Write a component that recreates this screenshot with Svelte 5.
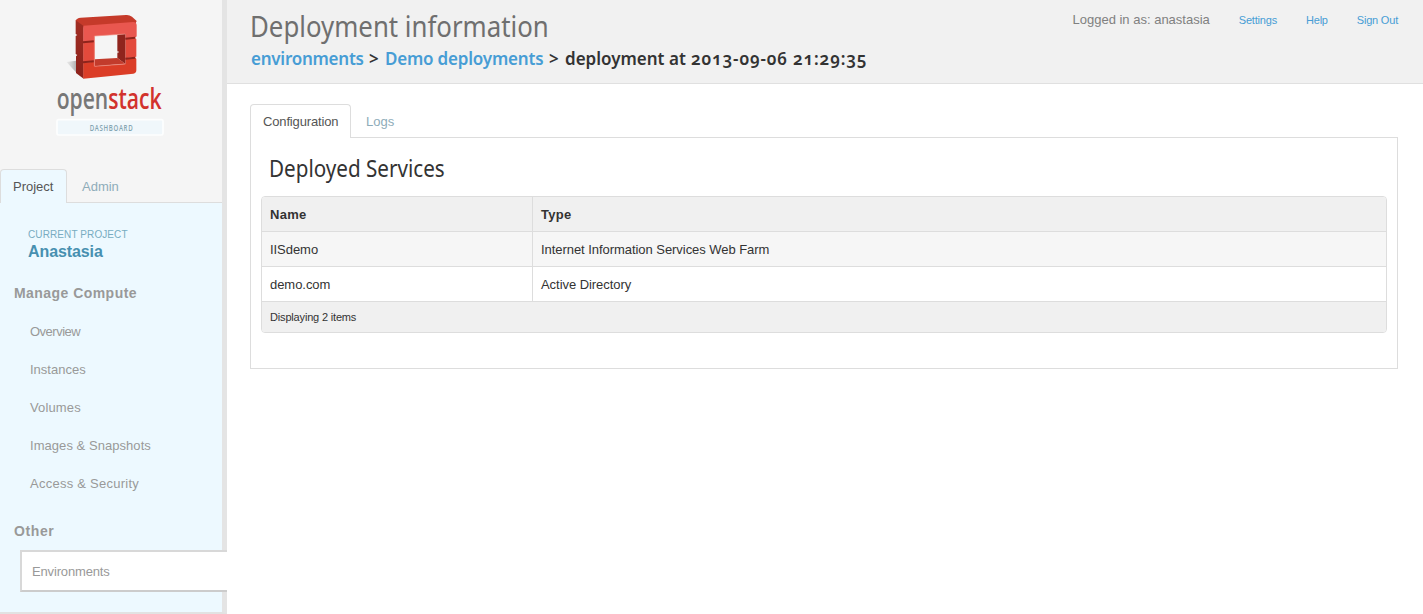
<script>
  const compute = ['Overview', 'Instances', 'Volumes', 'Images & Snapshots', 'Access & Security'];
  const services = [
    { name: 'IISdemo', type: 'Internet Information Services Web Farm' },
    { name: 'demo.com', type: 'Active Directory' }
  ];
</script>

<div class="page">
  <aside>
    <div class="brand">
      <svg width="150" height="145" viewBox="0 0 450 435" role="img" aria-label="OpenStack Dashboard">
        <defs>
          <linearGradient id="shadow" x1="0" x2="1">
            <stop offset="0" stop-color="#aaa" stop-opacity="0.15" />
            <stop offset="1" stop-color="#555" stop-opacity="0.85" />
          </linearGradient>
          <linearGradient id="side" x1="0" y1="0" x2="0" y2="1">
            <stop offset="0" stop-color="#a12d23" />
            <stop offset="1" stop-color="#8c221b" />
          </linearGradient>
        </defs>
        <path d="M80 186L108 182V218L129 235Q105 216 80 186Z" fill="url(#shadow)" />
        <path d="M107 62Q110 54 122 53L258 45Q268 44 276 50L290 63L286 72L132 83Z" fill="#c53a2a" />
        <path d="M107 61L131 78V236L108 219V169L112 165L107 162V108L112 105L107 102Z" fill="url(#side)" />
        <path d="M130 77L280 66Q289 66 290 75V109L286 113L256 117V102L164 108V124L130 127Z" fill="#e9574f" />
        <path d="M130 127L164 124V186L130 188ZM256 117L289 114V170L256 175Z" fill="#e34a3c" />
        <path d="M130 188L164 185V199L256 192V175L289 172V211Q289 220 280 221L130 236Z" fill="#db3d27" />
        <path d="M232 104L256 102V192L232 174Z" fill="#8f241d" />
        <path d="M164 178L232 174L256 191L164 199Z" fill="#c23b2c" />
        <path d="M129 127L162 124M129 187L162 184M256 116L286 113M256 176L286 173" fill="none" stroke="#8d241c" stroke-width="6" />
        <path d="M163 199V108L255 102M164 199L256 192" fill="none" stroke="#f08c80" stroke-width="2" />
        <path d="M232 152l5 4l-5 4ZM291 111l-6 3l6 4ZM291 170l-6 3l6 4Z" fill="#f5f5f5" />
        <text class="logo" x="50" y="328" textLength="315" lengthAdjust="spacingAndGlyphs"><tspan class="grey">open</tspan><tspan class="red">stack</tspan></text>
        <rect x="51" y="359" width="318" height="46" rx="5" fill="#f0f7fb" stroke="#fdfefe" stroke-width="5" />
        <text class="dash" x="149" y="392" fill="#84a5b2" textLength="131" lengthAdjust="spacingAndGlyphs">DASHBOARD</text>
      </svg>
    </div>
    <div class="tabs side"><a class="tab active project">Project</a><a class="tab admin">Admin</a></div>
    <div class="panel">
      <div class="current">CURRENT PROJECT</div>
      <div class="tenant">Anastasia</div>
      <h4>Manage Compute</h4>
      {#each compute as item, i}
        <a class="item i{i}">{item}</a>
      {/each}
      <h4 class="other">Other</h4>
      <a class="selected">Environments</a>
    </div>
  </aside>

  <main>
    <header>
      <div>
        <h1>Deployment information</h1>
        <h3>
          <a class="env">environments</a><span class="sep">&gt;</span><a class="demo">Demo deployments</a><span class="sep">&gt;</span><span class="dep">deployment at</span><span class="date">2013-09-06 21:29:35</span>
        </h3>
      </div>
      <nav>
        <span class="user">Logged in as: anastasia</span><a class="settings">Settings</a><a class="help">Help</a><a class="out">Sign Out</a>
      </nav>
    </header>
    <div class="content">
      <div class="tabs"><a class="tab active config">Configuration</a><a class="tab">Logs</a></div>
      <section>
        <h2>Deployed Services</h2>
        <div class="table">
          <div class="row head"><b>Name</b><b>Type</b></div>
          {#each services as s, i}
            <div class="row r{i}"><span>{s.name}</span><span>{s.type}</span></div>
          {/each}
          <div class="foot">Displaying 2 items</div>
        </div>
      </section>
    </div>
  </main>
</div>

<style>
  :global(body) { background: #fff; }
  * { box-sizing: border-box; }
  .page { display: flex; height: 614px; overflow: hidden; font: 13px/18px "Liberation Sans", Arial, sans-serif; color: #333; }
  aside { width: 227px; height: 614px; flex: none; display: flex; flex-direction: column; background: #f5f5f5; border-right: 5px solid #e4e4e4; border-bottom: 2px solid #e2e2e2; }
  .brand { height: 169px; padding-left: 40px; flex: none; }
  .brand svg { display: block; }
  .logo { font: 600 87px "Open Sans", sans-serif; }
  .grey { fill: #777; }
  .red { fill: #d2322d; }
  .dash { font: 600 27px "Open Sans", sans-serif; letter-spacing: 3px; }
  .tabs { display: flex; height: 34px; border-bottom: 1px solid #ddd; }
  .tab { height: 33px; padding: 9px 13px 0 15px; color: #8eacb9; white-space: nowrap; }
  .tab.active { height: 34px; padding: 8px 12px 0; border: 1px solid #ddd; border-bottom: 0; border-radius: 4px 4px 0 0; color: #555; background: #fff; }
  .tab.project { width: 67px; background: #edf9ff; }
  .side { flex: none; }
  .config { width: 101px; letter-spacing: -.15px; }
  .panel { flex: 1; background: #edf9ff; display: flex; flex-direction: column; }
  .current { margin: 24px 0 0 28px; font-size: 10px; line-height: 16px; color: #78acc1; letter-spacing: .1px; }
  .tenant { margin-left: 28px; font-size: 16px; line-height: 18px; font-weight: bold; color: #4790b0; letter-spacing: -.1px; }
  h4 { margin: 23px 0 11px 14px; font-size: 14px; line-height: 18px; color: #999; letter-spacing: .45px; }
  .item { padding: 10px 0 10px 30px; color: #999; }
  .i0 { letter-spacing: -.5px; }
  .i2 { letter-spacing: .14px; }
  .i3 { letter-spacing: .05px; }
  .i4 { letter-spacing: .25px; }
  h4.other { margin: 19px 0 10px 14px; letter-spacing: .6px; }
  .selected { height: 42px; margin: 0 -5px 0 20px; padding: 11px 10px 0; border: 2px solid #d8d8d8; border-bottom-color: #ccc; border-right: 0; background: #fff; color: #999; position: relative; letter-spacing: -.15px; }
  .settings, .help, .out { letter-spacing: -.2px; }
  main { flex: 1; min-width: 0; }
  header { height: 84px; padding: 0 25px 0 24px; display: flex; justify-content: space-between; background: #f1f1f1; border-bottom: 1px solid #e0e0e0; }
  h1, h2, h3 { margin: 0; white-space: nowrap; }
  h1 { margin: 8px 0 0 -1px; width: 330px; font: 400 29px/36px "Noto Sans", sans-serif; color: #6f6f6f; transform: scaleX(.89); transform-origin: left; }
  h3 { display: flex; margin-top: 3px; font: 600 17px/24px "Noto Sans", sans-serif; font-variant-numeric: oldstyle-nums; color: #333; }
  h3 a { color: #479dd5; }
  .env { width: 118px; letter-spacing: -.25px; }
  .sep { width: 16px; }
  .demo { width: 164px; letter-spacing: -.2px; }
  .dep { width: 126px; }
  .date { letter-spacing: .85px; }
  nav { display: flex; margin-top: 11px; font-size: 11px; white-space: nowrap; }
  nav a { color: #479dd5; }
  .user { font-size: 13px; color: #808080; margin-right: 29px; }
  .settings, .help { margin-right: 29px; }
  .content { padding: 20px 25px 0 23px; }
  section { height: 231px; border: 1px solid #ddd; border-top: 0; padding: 15px 10px 0; }
  h2 { margin-left: 8px; height: 43px; width: 300px; font: 400 23px/30px "Noto Sans", sans-serif; color: #333; transform: scaleX(.897); transform-origin: left; }
  .table { border: 1px solid #ddd; border-radius: 4px; overflow: hidden; }
  .row { display: grid; grid-template-columns: 271px 1fr; height: 35px; border-bottom: 1px solid #ddd; }
  .row > * { padding: 9px 8px 7px; letter-spacing: -.05px; }
  .row > :first-child { border-right: 1px solid #ddd; }
  .row b { letter-spacing: .3px; }
  .head, .foot { background: #f0f0f0; }
  .r0 { background: #f6f6f6; }
  .foot { height: 30px; padding: 6px 8px; font-size: 11px; letter-spacing: -.17px; }
</style>
